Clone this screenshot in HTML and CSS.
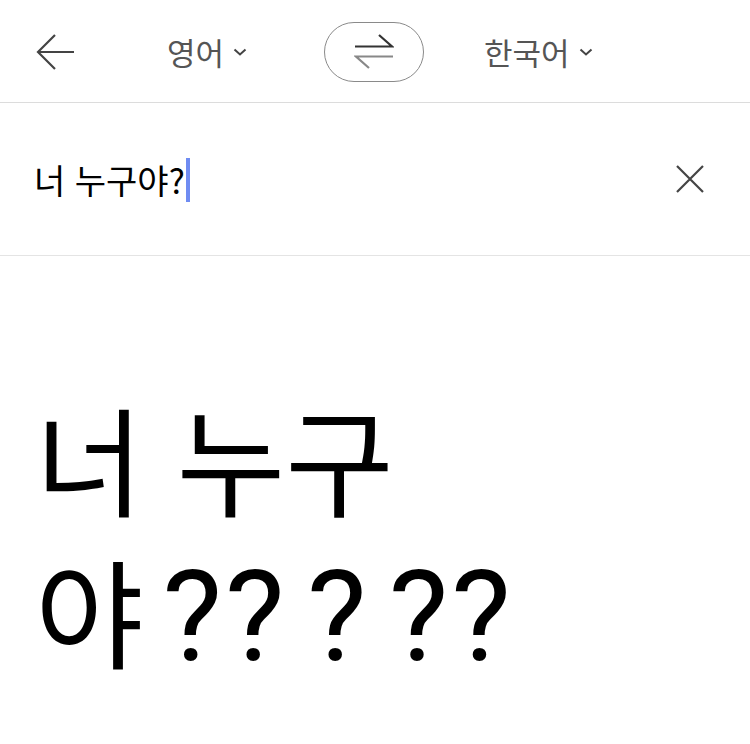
FILE: index.html
```html
<!DOCTYPE html>
<html lang="ko">
<head>
<meta charset="utf-8">
<link rel="stylesheet" href="styles.css">
</head>
<body>
<div class="app">
  <header class="topbar">
    <button class="back" aria-label="뒤로">
      <svg width="40" height="40" viewBox="0 0 40 40"><path d="M38 20H2M19 3L2 20L19 37" fill="none" stroke="#444" stroke-width="2.2"/></svg>
    </button>
    <div class="lang lang-src"><span>영어</span>
      <svg class="chev" width="14" height="10" viewBox="0 0 14 10"><path d="M1.5 2.5L7 7.5L12.5 2.5" fill="none" stroke="#444" stroke-width="2"/></svg>
    </div>
    <button class="swap" aria-label="언어 전환">
      <svg width="40" height="36" viewBox="0 0 40 36"><path d="M1 12.5H38L25 1" fill="none" stroke="#333" stroke-width="2.2"/><path d="M39 22.5H2L15 34" fill="none" stroke="#888" stroke-width="2.2"/></svg>
    </button>
    <div class="lang lang-dst"><span>한국어</span>
      <svg class="chev" width="14" height="10" viewBox="0 0 14 10"><path d="M1.5 2.5L7 7.5L12.5 2.5" fill="none" stroke="#444" stroke-width="2"/></svg>
    </div>
  </header>
  <section class="input-row">
    <div class="input-text">너 누구야?<span class="caret"></span></div>
    <button class="clear" aria-label="지우기">
      <svg width="30" height="30" viewBox="0 0 30 30"><path d="M2 2L28 28M28 2L2 28" fill="none" stroke="#444" stroke-width="2.2"/></svg>
    </button>
  </section>
  <section class="result">
    <p class="result-line">너 누구</p>
    <p class="result-line">야<span class="q">?? ? ??</span></p>
  </section>
</div>
</body>
</html>
```

FILE: styles.css
```css
html, body {
  margin: 0;
  padding: 0;
  background: #fff;
}
body {
  font-family: "Noto Sans CJK KR", "Noto Sans", sans-serif;
  color: #000;
  width: 750px;
  height: 744px;
  overflow: hidden;
}
button {
  border: none;
  background: none;
  padding: 0;
  margin: 0;
  font: inherit;
  display: flex;
  align-items: center;
  justify-content: center;
}
.topbar {
  height: 103px;
  border-bottom: 1px solid #dcdcdc;
  display: flex;
  align-items: center;
  padding-left: 36px;
  box-sizing: border-box;
}
.back {
  width: 40px;
  height: 40px;
  margin-top: 1px;
}
.lang {
  display: flex;
  align-items: center;
  gap: 9px;
  font-size: 31px;
  color: #555;
  line-height: 1;
}
.lang span {
  display: block;
}
.chev {
  margin-top: 2px;
}
.lang-src {
  margin-left: 91px;
  width: 157px;
}
.swap {
  width: 100px;
  height: 60px;
  border: 1px solid #8a8a8a;
  border-radius: 30px;
  box-sizing: border-box;
  margin-top: 1px;
}
.lang-dst {
  margin-left: 60px;
}
.input-row {
  height: 153px;
  border-bottom: 1px solid #e4e4e4;
  box-sizing: border-box;
  display: flex;
  align-items: center;
  padding: 0 45px 0 34px;
  justify-content: space-between;
}
.input-text {
  font-size: 34px;
  line-height: 1;
  display: flex;
  align-items: center;
  margin-top: 2px;
}
.caret {
  display: inline-block;
  width: 4px;
  height: 44px;
  background: #6f8cf2;
  margin-left: 1px;
}
.clear {
  width: 30px;
  height: 30px;
}
.result {
  padding: 125px 0 0 35px;
}
.result-line {
  margin: 0;
  font-size: 118px;
  line-height: 152px;
  height: 152px;
  color: #000;
}
.q {
  font-family: Roboto, "Liberation Sans", sans-serif;
  font-size: 126px;
  line-height: 152px;
  letter-spacing: 3px;
  word-spacing: -15px;
  margin-left: 19px;
}
```
